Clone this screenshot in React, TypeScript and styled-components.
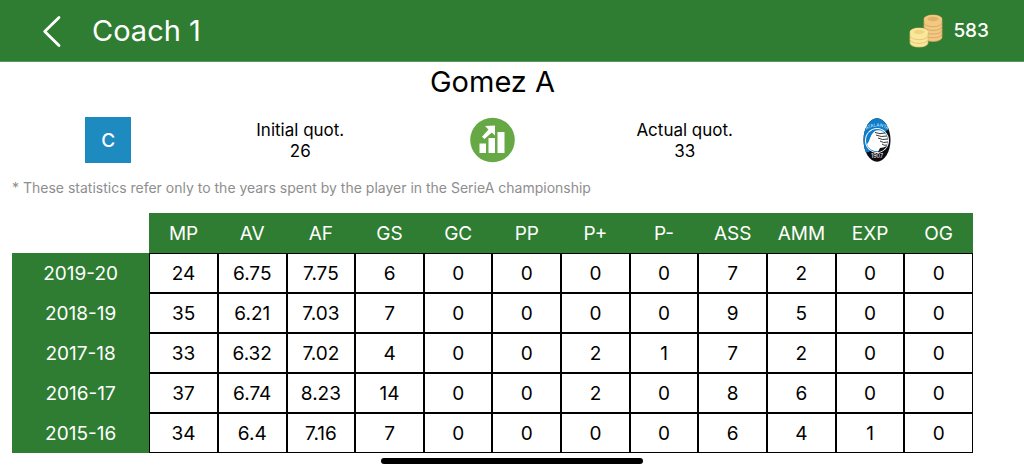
import React from "react";
import styled, { createGlobalStyle } from "styled-components";

const GREEN = "#2f7d32";

const GlobalStyle = createGlobalStyle`
  *, *::before, *::after { box-sizing: border-box; }
  body {
    margin: 0;
    background: #fff;
    color: #000;
    font-family: Inter, "Liberation Sans", sans-serif;
  }
`;

const TopBar = styled.header`
  display: flex;
  align-items: center;
  height: 62px;
  padding: 0 35px 0 40px;
  border-bottom: 1px solid #5a975c;
  background: ${GREEN};
  color: #fff;
`;

const BackButton = styled.button`
  display: flex;
  margin: 0;
  padding: 0;
  border: 0;
  background: none;
  color: inherit;
  cursor: pointer;
`;

const BarTitle = styled.h1`
  flex: 1;
  margin: 0 0 0 28px;
  font-size: 29px;
  line-height: 36px;
  font-weight: 400;
`;

const Wallet = styled.div`
  display: flex;
  align-items: center;
  gap: 10px;
  font-size: 19px;
  line-height: 24px;
  font-weight: 500;
`;

const Content = styled.main`
  padding: 0 51px 0 12px;
`;

const PlayerName = styled.h2`
  margin: 0;
  font-size: 29px;
  line-height: 40px;
  font-weight: 400;
  text-align: center;
`;

const Summary = styled.section`
  display: grid;
  grid-template-columns: repeat(5, 1fr);
  align-items: center;
  justify-items: center;
  height: 62px;
  margin-top: 7px;
`;

const RoleBadge = styled.div`
  display: grid;
  place-items: center;
  width: 46px;
  height: 46px;
  background: #1e8bc0;
  color: #fff;
  font-size: 19px;
  font-weight: 500;
`;

const Quote = styled.div`
  padding-top: 2px;
  font-size: 17px;
  line-height: 21px;
  text-align: center;
`;

const Note = styled.p`
  margin: 8px 0 16px;
  color: #8e8e8e;
  font-size: 14px;
  line-height: 18px;
`;

const StatsTable = styled.table`
  width: 100%;
  table-layout: fixed;
  border-collapse: separate;
  border-spacing: 0;
  font-size: 19px;
  line-height: 24px;
  text-align: center;
`;

const SeasonCol = styled.col`
  width: calc(100% / 7);
`;

const HeadCell = styled.th`
  height: 40px;
  padding: 2px 0 0;
  background: ${GREEN};
  color: #fff;
  font-weight: 400;
`;

const BlankCell = styled.td`
  padding: 0;
`;

const StatCell = styled.td`
  height: 40px;
  padding: 2px 0 0;
  border: 1px solid #000;
`;

const HomeIndicator = styled.div`
  width: 262px;
  height: 6px;
  margin: 5px auto 0;
  border-radius: 3px;
  background: #000;
`;

const columns = ["MP", "AV", "AF", "GS", "GC", "PP", "P+", "P-", "ASS", "AMM", "EXP", "OG"];

const seasons = [
  { year: "2019-20", stats: ["24", "6.75", "7.75", "6", "0", "0", "0", "0", "7", "2", "0", "0"] },
  { year: "2018-19", stats: ["35", "6.21", "7.03", "7", "0", "0", "0", "0", "9", "5", "0", "0"] },
  { year: "2017-18", stats: ["33", "6.32", "7.02", "4", "0", "0", "2", "1", "7", "2", "0", "0"] },
  { year: "2016-17", stats: ["37", "6.74", "8.23", "14", "0", "0", "2", "0", "8", "6", "0", "0"] },
  { year: "2015-16", stats: ["34", "6.4", "7.16", "7", "0", "0", "0", "0", "6", "4", "1", "0"] },
];

const ChevronIcon = () => (
  <svg width="24" height="34" viewBox="0 0 24 34" fill="none" aria-hidden="true">
    <path d="M19 3.500 L4.700 17.500 L19 31.500" stroke="#fff" strokeWidth="2.800" strokeLinecap="round" strokeLinejoin="round" />
  </svg>
);

type StackProps = { x: number; top: number; count: number; fill: string; edge: string; face: string };

const CoinStack = ({ x, top, count, fill, edge, face }: StackProps) => {
  const coins = Array.from({ length: count }, (_, i) => top + (count - 1 - i) * 3.7);
  return (
    <g>
      {coins.map((y) => (
        <path
          key={y}
          d={`M${x} ${y} a9 4 0 0 1 18 0 v3.700 a9 4 0 0 1 -18 0 z`}
          fill={fill}
          stroke={edge}
          strokeWidth="0.700"
        />
      ))}
      <ellipse cx={x + 9} cy={top} rx="9" ry="4" fill={fill} />
      <ellipse cx={x + 9} cy={top} rx="5.500" ry="2.200" fill={face} />
    </g>
  );
};

const CoinsIcon = () => (
  <svg width="34" height="34" viewBox="0 0 34 34" aria-hidden="true">
    <CoinStack x={15} top={5} count={5} fill="#f2c883" edge="#cf9d58" face="#dfb268" />
    <CoinStack x={1} top={18} count={3} fill="#fbe79c" edge="#d6bc6c" face="#efd583" />
  </svg>
);

const TrendIcon = () => (
  <svg width="46" height="46" viewBox="0 0 46 46" role="img" aria-label="Quotation rising">
    <circle cx="23.500" cy="23" r="22.300" fill="#65a844" />
    <g fill="#fff">
      <rect x="10.500" y="26.500" width="6.500" height="9.500" />
      <rect x="19.500" y="21" width="6.500" height="15" />
      <rect x="28.500" y="15" width="7" height="21" />
      <path d="M16 9 L26 8.500 L26 18.500 L22.800 15.500 L15.500 22 L13 19.700 L19.500 12.500 Z" />
    </g>
  </svg>
);

const CrestIcon = () => (
  <svg width="28" height="44" viewBox="0 0 28 44" role="img" aria-label="Atalanta 1907">
    <defs>
      <clipPath id="crest">
        <ellipse cx="14" cy="22" rx="13.500" ry="21.700" />
      </clipPath>
      <path id="crestArc" d="M3 12 Q14 5 25 12" />
    </defs>
    <g clipPath="url(#crest)">
      <rect width="28" height="44" fill="#0c0c10" />
      <path d="M0 0 H28 V9 L22 14 L6 34 L0 35 Z" fill="#0f7cc9" />
      <ellipse cx="14" cy="22.500" rx="12" ry="12.500" fill="#fff" />
      <ellipse cx="14" cy="22.500" rx="11" ry="11.500" fill="#0f7cc9" />
      <path d="M4 26 C7 24 7 15 13 12.500 Q20 11 24 18 Q27 26 21 31 Q15 35 9 32 Q5 30 4 26 Z" fill="#fff" />
      <g stroke="#222" strokeWidth="0.900" fill="none">
        <path d="M12 14.500 Q17 16.500 22 15" />
        <path d="M13 17 Q18 19.500 24 18" />
        <path d="M15 20 Q19 22.500 25 21" />
        <path d="M17 23 Q20 25.500 25 24" />
        <path d="M19 26 Q21 28 24 27" />
      </g>
      <path d="M17 30 Q20 30 24 28 Q21 33 15 34 Z" fill="#111" />
    </g>
    <text fontSize="4.500" fill="#d5e8f6" textAnchor="middle">
      <textPath href="#crestArc" startOffset="50%">ATALANTA</textPath>
    </text>
    <text x="14" y="40" fontSize="5.500" fill="#fff" textAnchor="middle">1907</text>
  </svg>
);

export default function App() {
  return (
    <>
      <GlobalStyle />
      <TopBar>
        <BackButton type="button" aria-label="Back">
          <ChevronIcon />
        </BackButton>
        <BarTitle>Coach 1</BarTitle>
        <Wallet>
          <CoinsIcon />
          <span>583</span>
        </Wallet>
      </TopBar>
      <Content>
        <PlayerName>Gomez A</PlayerName>
        <Summary>
          <RoleBadge>C</RoleBadge>
          <Quote>
            <div>Initial quot.</div>
            <div>26</div>
          </Quote>
          <TrendIcon />
          <Quote>
            <div>Actual quot.</div>
            <div>33</div>
          </Quote>
          <CrestIcon />
        </Summary>
        <Note>* These statistics refer only to the years spent by the player in the SerieA championship</Note>
        <StatsTable>
          <colgroup>
            <SeasonCol />
            {columns.map((name) => (
              <col key={name} />
            ))}
          </colgroup>
          <thead>
            <tr>
              <BlankCell />
              {columns.map((name) => (
                <HeadCell key={name} scope="col">{name}</HeadCell>
              ))}
            </tr>
          </thead>
          <tbody>
            {seasons.map(({ year, stats }) => (
              <tr key={year}>
                <HeadCell scope="row">{year}</HeadCell>
                {stats.map((value, i) => (
                  <StatCell key={columns[i]}>{value}</StatCell>
                ))}
              </tr>
            ))}
          </tbody>
        </StatsTable>
      </Content>
      <HomeIndicator />
    </>
  );
}
